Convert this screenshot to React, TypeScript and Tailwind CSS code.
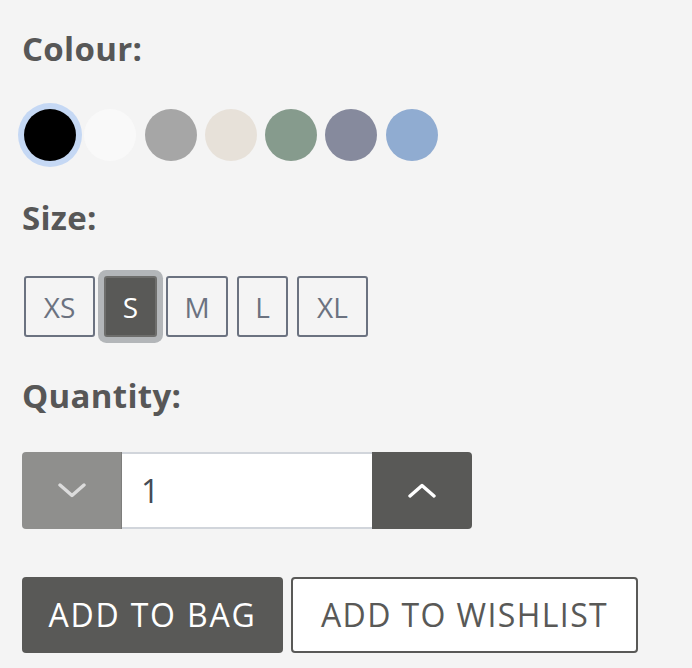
import { useState } from "react";

const colours = [
  { name: "Black", hex: "bg-[#000000]" },
  { name: "White", hex: "bg-[#f9f9f9]" },
  { name: "Grey", hex: "bg-[#a6a6a6]" },
  { name: "Stone", hex: "bg-[#e7e1d9]" },
  { name: "Sage", hex: "bg-[#869b8d]" },
  { name: "Slate", hex: "bg-[#868a9d]" },
  { name: "Sky", hex: "bg-[#90acd1]" },
];

const sizes = [
  { label: "XS", w: "w-[71px]" },
  { label: "S", w: "w-[53px]" },
  { label: "M", w: "w-[62px]" },
  { label: "L", w: "w-[51px]" },
  { label: "XL", w: "w-[71px]" },
];

const Chevron = ({ up, className }: { up?: boolean; className?: string }) => (
  <svg viewBox="0 0 28 15" className={className} fill="none" aria-hidden="true">
    <polyline
      points={up ? "2,13 14,2.5 26,13" : "2,2 14,12.5 26,2"}
      stroke="currentColor"
      strokeWidth="3.4"
      strokeLinecap="round"
      strokeLinejoin="round"
    />
  </svg>
);

const App = () => {
  const [colour, setColour] = useState("Black");
  const [size, setSize] = useState("S");
  const [qty, setQty] = useState(1);

  return (
    <div className="min-h-screen bg-[#f4f4f4] pl-[22px] pt-[32px] font-['Open_Sans',sans-serif] text-[#575757]">
      <h2 className="text-[33px] font-bold leading-none tracking-[0.3px]">Colour:</h2>
      <div className="mt-[44px] ml-[2px] flex gap-[8.3px]">
        {colours.map((c) => (
          <button
            key={c.name}
            title={c.name}
            onClick={() => setColour(c.name)}
            className={`size-[52px] rounded-full ${c.hex} ${
              colour === c.name ? "ring-[6px] ring-[#c5d8f4]" : ""
            }`}
          />
        ))}
      </div>

      <h2 className="mt-[40px] text-[33px] font-bold leading-none tracking-[0.3px]">Size:</h2>
      <div className="mt-[42px] ml-[2px] flex gap-[9px]">
        {sizes.map((s) =>
          size === s.label ? (
            <button
              key={s.label}
              onClick={() => setSize(s.label)}
              className={`${s.w} flex h-[61px] items-center justify-center rounded-[3px] border-2 border-[#6e6e6c] bg-[#595957] text-[28px] text-white ring-[6px] ring-[#b3b6b9]`}
            >
              {s.label}
            </button>
          ) : (
            <button
              key={s.label}
              onClick={() => setSize(s.label)}
              className={`${s.w} flex h-[61px] items-center justify-center rounded-[3px] border-2 border-[#6b7280] text-[28px] text-[#6b7280]`}
            >
              {s.label}
            </button>
          )
        )}
      </div>

      <h2 className="mt-[42px] text-[33px] font-bold leading-none tracking-[0.3px]">Quantity:</h2>
      <div className="mt-[40px] flex h-[77px]">
        <button
          onClick={() => setQty((q) => Math.max(1, q - 1))}
          className="flex w-[100px] items-center justify-center rounded-l-[4px] border-r border-r-[#7e7e7c] bg-[#8f8f8d] text-[#dcdcdc]"
        >
          <Chevron className="h-[15px] w-[28px]" />
        </button>
        <div className="flex w-[250px] items-center border-y-2 border-[#d1d5db] bg-white pl-[19px] text-[32px] text-[#454b55]">
          {qty}
        </div>
        <button
          onClick={() => setQty((q) => q + 1)}
          className="flex w-[100px] items-center justify-center rounded-r-[4px] bg-[#595957] text-white"
        >
          <Chevron up className="h-[15px] w-[28px]" />
        </button>
      </div>

      <div className="mt-[48px] flex gap-[8px]">
        <button className="flex h-[76px] w-[261px] items-center justify-center rounded-[4px] bg-[#595957] text-[32px] tracking-[1.8px] text-white">
          ADD TO BAG
        </button>
        <button className="flex h-[76px] w-[347px] items-center justify-center rounded-[4px] border-2 border-[#595957] bg-white text-[32px] tracking-[1.4px] text-[#595957]">
          ADD TO WISHLIST
        </button>
      </div>
    </div>
  );
};

export default App;
